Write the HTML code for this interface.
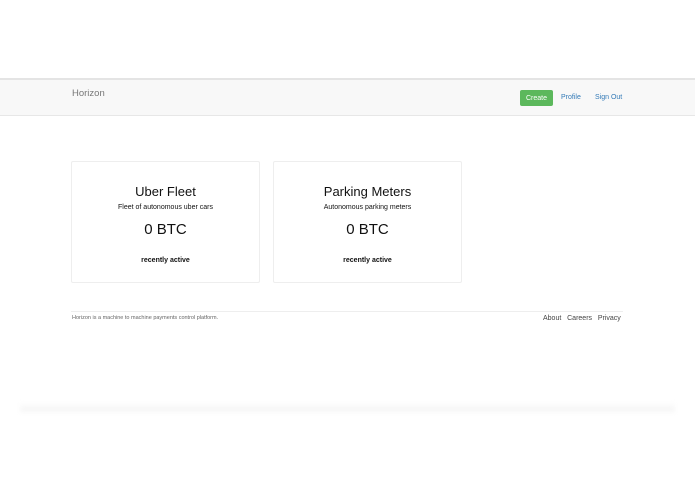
<!DOCTYPE html>
<html><head><style>
body{margin:0;width:695px;height:494px;background:#fff;font-family:"Liberation Sans",sans-serif;position:relative;overflow:hidden}
.a{position:absolute;white-space:nowrap}
.nav{position:absolute;left:0;top:78px;width:695px;height:35px;background:#f8f8f8;border-top:2px solid #e4e4e4;border-bottom:1px solid #e7e7e7}
.card{position:absolute;top:161px;width:187px;height:120px;border:1px solid #eee;border-radius:2px;text-align:center;color:#111}
.card .t{position:absolute;left:0;right:0;top:22px;font-size:13px}
.card .s{position:absolute;left:0;right:0;top:42px;font-size:7px}
.card .b{position:absolute;left:0;right:0;top:59px;font-size:15px}
.card .r{position:absolute;left:0;right:0;top:95px;font-size:7px;font-weight:bold}
</style></head><body>
<div class="nav"></div>
<div class="a" style="left:72px;top:88px;font-size:9.5px;color:#777">Horizon</div>
<div class="a" style="left:520px;top:90px;width:33px;height:16px;background:#5cb85c;border-radius:2px;color:#fff;font-size:7px;line-height:17px;text-align:center">Create</div>
<div class="a" style="left:561px;top:94px;font-size:7px;color:#337ab7">Profile</div>
<div class="a" style="left:595px;top:94px;font-size:7px;color:#337ab7">Sign Out</div>
<div class="card" style="left:71px"><div class="t">Uber Fleet</div><div class="s">Fleet of autonomous uber cars</div><div class="b">0 BTC</div><div class="r">recently active</div></div>
<div class="card" style="left:273px"><div class="t">Parking Meters</div><div class="s">Autonomous parking meters</div><div class="b">0 BTC</div><div class="r">recently active</div></div>
<div class="a" style="left:71px;top:311px;width:552px;height:1px;background:#eee"></div>
<div class="a" style="left:72px;top:315px;font-size:5.5px;color:#666">Horizon is a machine to machine payments control platform.</div>
<div class="a" style="left:543px;top:315px;font-size:7px;color:#444">About&nbsp;&nbsp;&nbsp;Careers&nbsp;&nbsp;&nbsp;Privacy</div>
<div class="a" style="left:20px;top:402px;width:655px;height:10px;background:linear-gradient(#fff,#f4f4f4);filter:blur(2px)"></div>
</body></html>
